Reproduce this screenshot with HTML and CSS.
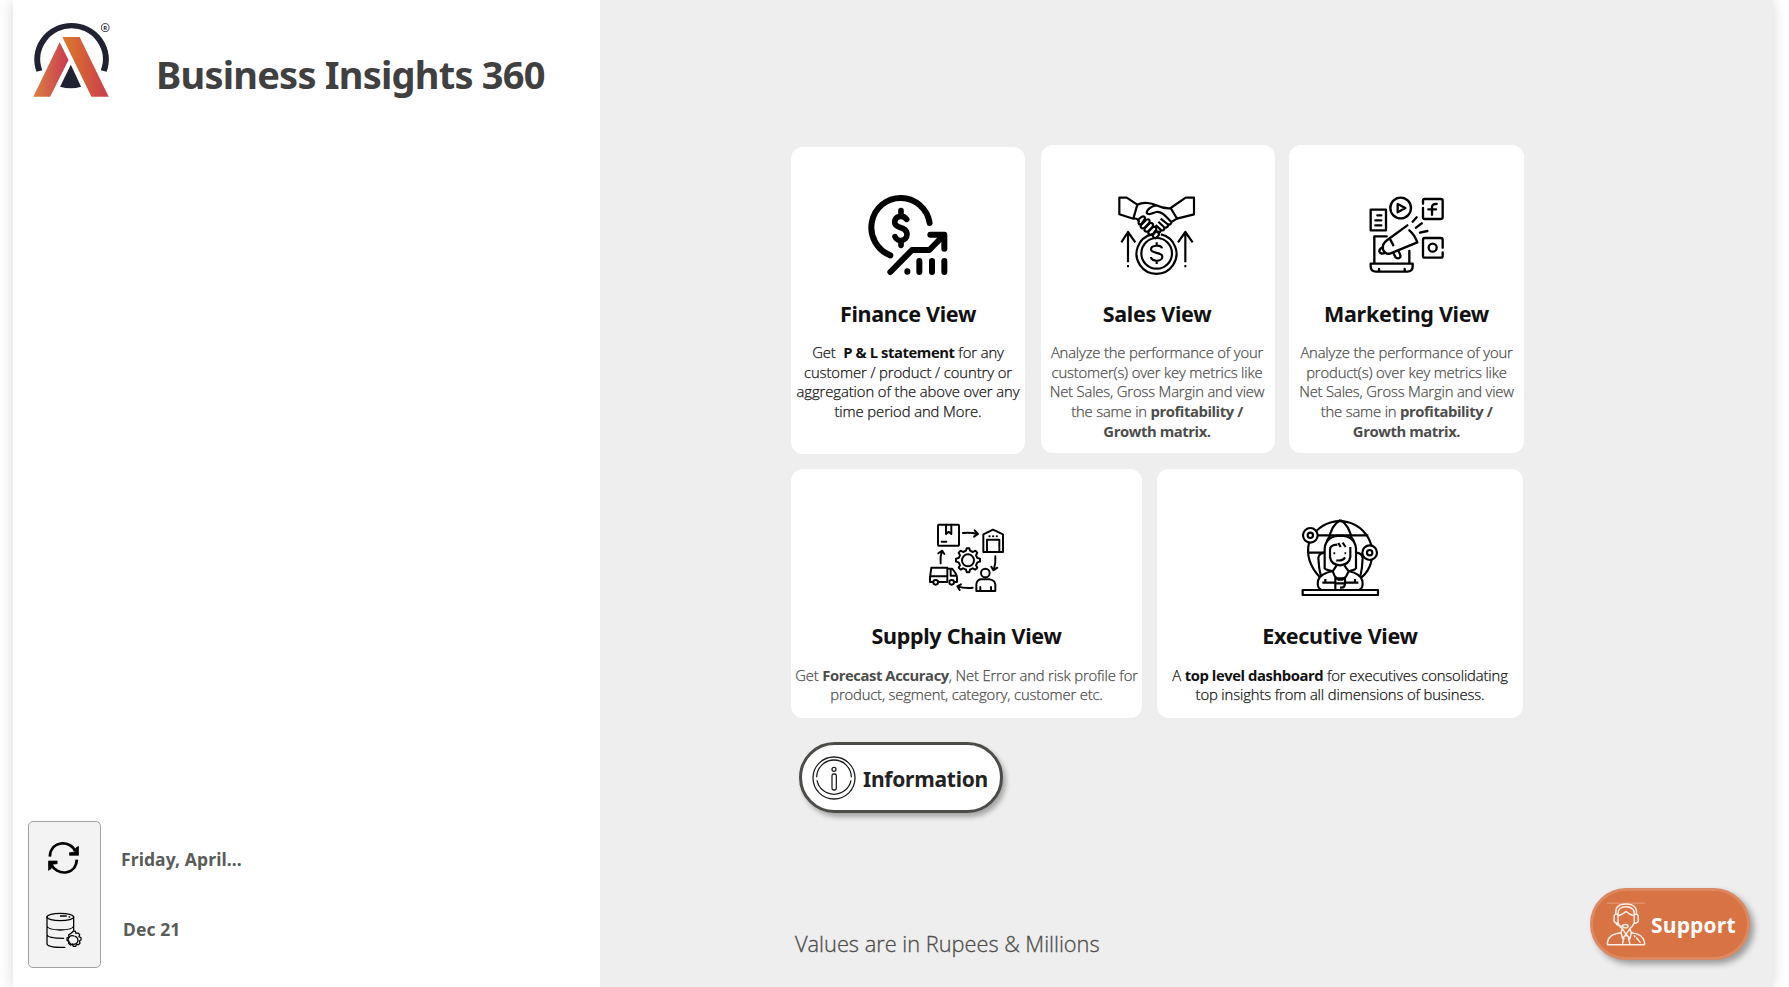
FILE: index.html
```
<!DOCTYPE html>
<html lang="en">
<head>
<meta charset="utf-8">
<title>Business Insights 360</title>
<link rel="stylesheet" href="styles.css">
</head>
<body>
<div class="page">
  <aside class="sidebar">
    <header class="brand">
      <svg class="logo" viewBox="78.4 52.3 219.5 245.6" preserveAspectRatio="none">
        <defs>
          <linearGradient id="legLeft"><stop offset="0" stop-color="#dc8040"/><stop offset="1" stop-color="#c93a52"/></linearGradient>
          <linearGradient id="legRight"><stop offset="0" stop-color="#dc7a28"/><stop offset="1" stop-color="#ca3c50"/></linearGradient>
        </defs>
        <path d="M103 214A89.5 101 0 1 1 271 214" fill="none" stroke="#202231" stroke-width="16"/>
        <path d="M185 195L212 261Q185 271 157 261Z" fill="#202231"/>
        <path d="M156 128L179 181L131 291H87Z" fill="url(#legLeft)"/>
        <path d="M163 112H208L284 291H239Z" fill="url(#legRight)"/>
        <ellipse cx="275" cy="84" rx="10" ry="12" fill="none" stroke="#202231" stroke-width="2.4"/>
        <text class="reg" x="270" y="90">R</text>
      </svg>
      <h1 class="title">Business Insights 360</h1>
    </header>
    <footer class="status">
      <div class="status-icons">
        <svg class="refresh" viewBox="140 120 104 108">
          <g fill="none" stroke="#000" stroke-width="8"><path d="M151 170C153 120 214 120 227 154"/><path d="M232 179C229 228 170 228 155 192"/></g>
          <path d="M237 139V166H210V158L227 156L229 144Z M147 211V183H173V191L158 193L155 206Z" stroke="#000" stroke-width="2" stroke-linejoin="round"/>
        </svg>
        <svg class="database" viewBox="134 334 114 114">
          <g fill="none" stroke="#000" stroke-width="3.8" stroke-linecap="round">
            <ellipse cx="180" cy="352" rx="40" ry="11"/>
            <path d="M140 352V432Q140 442 180 443H194M220 352V392M140 379Q142 390 180 391Q218 390 220 379M140 405Q142 416 190 416M180 349H198M206 352H208"/>
            <path d="M215 399l4-5 6 1 2 6 6-1 5 5-2 6 6 3v7l-5 3 2 6-4 5-6-1-3 6h-7l-3-6-6 2-5-5 1-6-6-3v-7l6-3-1-6 5-4z"/>
            <path d="M211 432A12 12 0 0 1 221 409M225 410A12 12 0 1 1 216 433"/>
          </g>
        </svg>
      </div>
      <div class="status-text">
        <span class="refresh-date">Friday, April...</span>
        <span class="data-month">Dec 21</span>
      </div>
    </footer>
  </aside>

  <main class="content">
    <div class="row row-top">
      <article class="card card-finance">
        <div class="icon-slot">
          <svg class="icon finance-icon" viewBox="0 0 330 300">
            <g fill="none" stroke="#000" stroke-linecap="round" stroke-linejoin="round">
              <path stroke-width="18" d="M239 114A88 89 0 1 0 121 211"/>
              <path stroke-width="18" d="M121 261L186 195H238L282 150M241 149H283V191"/>
              <path stroke-width="18" d="M172 259v1M208 228V261M246 228V261M283 228V261"/>
              <path stroke-width="17" d="M170 103C160 88 134 93 134 112C134 133 171 122 171 148C171 170 141 172 135 155M153 77V90M153 168V181"/>
            </g>
          </svg>
        </div>
        <h2>Finance View</h2>
        <p class="dark">Get &nbsp;<b>P &amp; L statement</b> for any<br>customer / product / country or<br>aggregation of the above over any<br>time period and More.</p>
      </article>

      <article class="card card-sales">
        <div class="icon-slot">
          <svg class="icon square-icon" viewBox="0 0 300 300">
            <g fill="none" stroke="#000" stroke-width="6.5" stroke-linejoin="round">
              <path d="M85 101L43 88V38H65L97 59ZM216 101L267 88V38H242L197 69Z"/>
              <path d="M97 59C115 50 140 54 154 61C170 69 185 71 197 70M86 101C95 99 99 103 102 110M216 101L199 111"/>
              <path d="M154 61C140 63 125 73 125 84C132 93 144 83 154 81C170 79 180 91 199 111C200 119 192 120 187 117L167 101M187 117C193 125 183 131 177 126L160 110M177 127C181 135 171 140 166 133L152 120M166 133C169 142 160 146 155 141"/>
              <g stroke-linecap="round">
                <path d="M102 110C97 106 102 101 108 97C117 91 123 97 118 104L109 117C103 121 98 115 102 110Z"/>
                <path d="M109 119L124 104C132 100 137 107 132 114L119 128C110 133 104 126 109 119Z"/>
                <path d="M120 129L135 114C143 112 147 119 142 126L131 138C122 143 115 137 120 129Z"/>
                <path d="M131 139L145 125C153 124 157 132 151 138L144 147C136 152 127 148 131 139Z"/>
                <path d="M144 149L153 139C163 137 166 147 159 153L152 160C145 158 141 154 144 149Z"/>
              </g>
              <path d="M141 148A60 60 0 1 0 168 148"/>
              <circle cx="155" cy="205" r="46"/>
              <path d="M171 190C169 179 138 179 138 193C138 208 172 199 172 215C172 231 138 231 138 216M155 172V183M155 226V237"/>
              <path d="M69 232V141M49 172L69 141L91 172M241 232V141M219 172L241 141L263 172"/>
            </g>
            <path d="M66 240h6v7h-6zM238 240h6v7h-6z"/>
          </svg>
        </div>
        <h2>Sales View</h2>
        <p>Analyze the performance of your<br>customer(s) over key metrics like<br>Net Sales, Gross Margin and view<br>the same in <b>profitability /</b><br><b>Growth matrix.</b></p>
      </article>

      <article class="card card-marketing">
        <div class="icon-slot">
          <svg class="icon square-icon" viewBox="0 0 300 300">
            <g fill="none" stroke="#000" stroke-width="7" stroke-linecap="round" stroke-linejoin="round">
              <path d="M38 74H84V136H38ZM58 91H70M52 106H70M52 121H70"/>
              <circle cx="128" cy="69" r="31"/>
              <path d="M119 57V82L142 69Z"/>
              <path d="M195 69V97Q195 102 200 102H248Q254 102 254 96V47Q254 42 248 42H200Q195 42 195 47V56M236 57Q222 56 222 67V89M211 73H234"/>
              <path d="M254 188V165Q254 159 248 159H200Q195 159 195 165V212Q195 218 200 218H248Q254 218 254 212V202"/>
              <circle cx="224" cy="188" r="12"/>
              <path d="M86 154H49V235M154 198V235M38 236H164V244Q164 260 148 260H54Q38 260 38 244ZM63 252V259M140 252V259"/>
              <path d="M148 121L88 165Q71 177 75 193Q80 208 96 206L178 172Q169 148 154 136M97 164L106 181"/>
              <path d="M75 187Q64 190 64 199Q68 210 82 203M106 204L113 217Q121 224 127 216Q129 211 121 198M164 110L176 97M174 128L191 115M186 143L208 138"/>
            </g>
          </svg>
        </div>
        <h2>Marketing View</h2>
        <p>Analyze the performance of your<br>product(s) over key metrics like<br>Net Sales, Gross Margin and view<br>the same in <b>profitability /</b><br><b>Growth matrix.</b></p>
      </article>
    </div>

    <div class="row row-bottom">
      <article class="card card-supply">
        <div class="icon-slot">
          <svg class="icon supply-icon" viewBox="0 0 285 255">
            <g fill="none" stroke="#000" stroke-width="5.8" stroke-linecap="round" stroke-linejoin="round">
              <rect x="54" y="29" width="63" height="63" rx="2"/>
              <path d="M78 29V57L86 50L94 57V29M65 80H79"/>
              <path d="M129 54Q150 51 173 57M164 46L174 57L162 65"/>
              <path d="M190 111V58L219 44L249 58V111ZM201 110V74H238V110M208 64h1M219 64h1M230 64h1"/>
              <path d="M226 124Q228 145 221 165M214 155L220 166L232 158"/>
              <path d="M62 145Q60 125 66 107M55 115L66 107L73 117"/>
              <path d="M158 218Q135 221 113 214M123 208L112 214L119 225"/>
              <path d="M39 201H30V188L34 158H82V201H55M30 184H81M84 161H96Q109 175 111 186V201H103M92 161V182H109"/>
              <circle cx="47" cy="202" r="7"/><circle cx="95" cy="202" r="7"/>
              <circle cx="196" cy="174" r="13"/>
              <path d="M169 228V208Q171 193 185 193H209Q224 195 226 208V228ZM181 228V216M213 228V216"/>
              <path d="M138 107L140 100H148L150 107L159 111L166 107L172 113L168 121L172 129L180 131V140L172 142L168 151L172 158L166 164L158 160L150 164L148 172H140L138 164L129 160L122 164L116 158L120 151L116 142L108 140V131L116 129L120 121L116 113L122 107L129 111Z"/>
              <circle cx="144" cy="136" r="18"/>
            </g>
          </svg>
        </div>
        <h2>Supply Chain View</h2>
        <p>Get <b>Forecast Accuracy</b>, Net Error and risk profile for<br>product, segment, category, customer etc.</p>
      </article>

      <article class="card card-executive">
        <div class="icon-slot">
          <svg class="icon executive-icon" viewBox="0 0 300 285">
            <g fill="none" stroke="#000" stroke-width="6.5" stroke-linejoin="round">
              <rect x="38" y="240" width="226" height="15"/>
              <circle cx="61" cy="76" r="22"/><circle cx="61" cy="76" r="8"/>
              <circle cx="239" cy="128" r="22"/><circle cx="239" cy="128" r="8"/>
              <path d="M80 62A98 98 0 0 1 244 106M57 98Q44 153 90 202M245 150Q238 183 214 203M84 76H235M55 128H103"/>
              <path d="M151 30Q124 45 116 90M151 30Q178 45 186 90M104 177V115Q108 78 151 77Q194 78 198 115V177M110 94L119 78M192 94L182 78"/>
              <path d="M104 128Q87 129 85 144Q86 175 93 199M198 128Q216 129 218 144Q217 175 211 199"/>
              <path d="M142 104Q120 105 120 119V141Q123 165 151 166Q178 163 181 141V111M139 151Q158 154 165 142M145 99L152 111M158 98L167 111" />
              <path d="M133 127V133M166 127V133" stroke-width="5"/>
              <path d="M104 177L127 184M198 177L177 184M140 166L128 184L135 200L145 209H157L168 200L176 184L163 166"/>
              <path d="M128 183Q90 191 84 212Q80 235 94 239M176 183Q211 191 217 212Q221 235 208 239M97 218H135M163 218H205M106 207V218M195 207V218M136 239V205H165V220H136M165 220Q164 233 155 233H150"/>
            </g>
          </svg>
        </div>
        <h2>Executive View</h2>
        <p class="dark">A <b>top level dashboard</b> for executives consolidating<br>top insights from all dimensions of business.</p>
      </article>
    </div>

    <button class="pill info-button" type="button">
      <svg class="info-icon" viewBox="97 886 132 132">
        <g fill="none" stroke="#1c1c1c" stroke-width="3.8">
          <circle cx="163" cy="952" r="63"/>
          <path d="M111 950A52 52 0 0 1 215 950M112 959A52 52 0 0 0 214 959"/>
          <circle cx="163" cy="926" r="6"/><rect x="157" y="940" width="13" height="48" rx="5"/>
        </g>
      </svg>
      <span>Information</span>
    </button>

    <div class="bottom-bar">
      <p class="note">Values are in Rupees &amp; Millions</p>
      <button class="pill support-button" type="button">
        <svg class="support-icon" viewBox="137 124 120 133">
          <path d="M140 127.500H254" stroke="#e5a080" stroke-width="3"/>
          <g fill="none" stroke="#fdeee6" stroke-width="4.5" stroke-linejoin="round">
            <path d="M166 161Q163 130 197 130Q231 130 229 161M173 160Q172 138 197 138Q222 138 222 160"/>
            <path d="M173 161H166Q161 162 161 168V182Q162 188 173 188ZM222 161H229Q234 162 234 168V182Q233 188 222 188Z"/>
            <path d="M173 166Q188 162 197 153Q206 162 222 166M173 187Q177 199 187 206M222 187Q218 199 207 206M167 188Q170 197 187 197"/>
            <ellipse cx="195" cy="197" rx="8" ry="5"/>
            <path d="M185 206L182 217Q144 221 141 246V253H253V246Q250 221 213 217L209 206M182 217L187 235L197 221L209 235L213 217M187 206L197 221L208 206M191 232L186 252M204 232L209 252M197 221V228"/>
            <path d="M222 226L224 229M229 233L240 246" stroke-linecap="round"/>
          </g>
        </svg>
        <span>Support</span>
      </button>
    </div>
  </main>
</div>
</body>
</html>
```
FILE: styles.css
```
* { box-sizing: border-box; }
body {
  margin: 0;
  background: #fff;
  font-family: "Open Sans", "Noto Sans", sans-serif;
  color: #4a4a4a;
}
h1, h2, p { margin: 0; white-space: nowrap; }
svg { display: block; flex: none; }
.page {
  display: flex;
  width: 1760px;
  height: 987px;
  margin-left: 13px;
  box-shadow: 0 0 14px rgba(0, 0, 0, .16);
}

/* Sidebar */
.sidebar {
  display: flex;
  flex-direction: column;
  justify-content: space-between;
  width: 587px;
  padding: 17px 15px 19px;
  background: #fff;
}
.brand { display: flex; padding-left: 2px; }
.logo { width: 84px; height: 82px; }
.reg { font: 700 15px "Open Sans", sans-serif; fill: #202231; }
.title {
  margin: 31px 0 0 42px;
  font: 700 38px/52px "Noto Sans", sans-serif;
  letter-spacing: -.78px;
  color: #3f403f;
}
.status { display: flex; gap: 20px; }
.status-icons {
  display: flex;
  flex-direction: column;
  align-items: center;
  width: 73px;
  height: 147px;
  padding: 18px 2px 0 0;
  background: #f3f3f3;
  border: 1px solid #a0a0a0;
  border-radius: 5px;
}
.refresh { width: 35px; height: 36px; }
.database { width: 38px; height: 38px; margin-top: 35px; }
.status-text {
  display: flex;
  flex-direction: column;
  gap: 40px;
  padding-top: 23px;
  font: 700 17.500px/30px "Noto Sans", sans-serif;
  letter-spacing: .1px;
  color: #5a5c5a;
}
.data-month { padding-left: 2px; }

/* Cards */
.content {
  display: flex;
  flex-direction: column;
  width: 1173px;
  padding: 145px 24px 0 191px;
  background: #eee;
}
.row { display: flex; }
.row-bottom { gap: 15px; margin-top: 15px; }
.card {
  background: #fff;
  border-radius: 12px;
  text-align: center;
}
.card-finance { width: 234px; height: 307px; margin: 2px 16px 0 0; }
.card-sales { width: 234px; height: 308px; margin-right: 14px; }
.card-marketing { width: 235px; height: 308px; }
.card-supply { width: 351px; height: 249px; }
.card-executive { width: 366px; height: 249px; }
.icon-slot { display: flex; height: 154px; }
.card-finance .icon-slot { height: 152px; padding: 38px 0 0 59px; }
.card-sales .icon-slot { padding: 40px 0 0 64px; }
.card-marketing .icon-slot { padding: 40px 0 0 69px; }
.card-supply .icon-slot { height: 152px; padding: 46px 0 0 129px; }
.card-executive .icon-slot { height: 152px; padding: 41px 0 0 133px; }
.finance-icon { width: 110px; height: 100px; }
.square-icon { width: 100px; height: 100px; }
.supply-icon { width: 95px; height: 85px; }
.executive-icon { width: 100px; height: 95px; }
.card h2 {
  font: 700 21.500px/30px "Noto Sans", sans-serif;
  letter-spacing: -.3px;
  color: #111;
}
.card-sales h2, .card-sales p { padding-right: 2px; }
.card p {
  margin-top: 14px;
  font-size: 14.800px;
  font-weight: 300;
  line-height: 19.650px;
  letter-spacing: -.16px;
  color: #4d4d4b;
  -webkit-text-stroke: .25px currentColor;
}
.card-finance p { letter-spacing: -.08px; }
.card-executive p { letter-spacing: -.12px; }
.row-bottom p { padding-top: .5px; }
.card b { font-weight: 700; letter-spacing: -.42px; -webkit-text-stroke: 0; }
.card .dark { color: #111; }

/* Pill buttons */
.pill {
  display: flex;
  align-items: center;
  height: 72px;
  padding: 0;
  border-radius: 36px;
  font-family: "Noto Sans", sans-serif;
  font-size: 21px;
  font-weight: 700;
  line-height: 30px;
}
.info-button {
  width: 204px;
  height: 71px;
  margin: 24px 0 0 8px;
  padding-left: 10px;
  gap: 7px;
  background: #fff;
  border: 3px solid #4b4b47;
  box-shadow: 3px 4px 5px rgba(0, 0, 0, .3);
  letter-spacing: -.25px;
  color: #222;
}
.info-icon { width: 44px; height: 44px; }
.info-button span { padding-top: 2px; }
.bottom-bar {
  display: flex;
  justify-content: space-between;
  margin-top: 75px;
  padding-left: 4px;
}
.note {
  padding-top: 41px;
  font-size: 21.800px;
  font-weight: 300;
  line-height: 30px;
  letter-spacing: -.01px;
  color: #4d4d4b;
  -webkit-text-stroke: .3px currentColor;
}
.support-button {
  width: 160px;
  padding-left: 13px;
  margin-right: -1px;
  gap: 5px;
  background: #d87343;
  border: 3px solid #dc8860;
  box-shadow: 4px 4px 6px rgba(0, 0, 0, .35);
  font-family: "Open Sans", sans-serif;
  letter-spacing: .15px;
  color: #fff;
}
.support-icon { width: 40px; height: 44px; }
.support-button span { padding-top: 2px; }
```
